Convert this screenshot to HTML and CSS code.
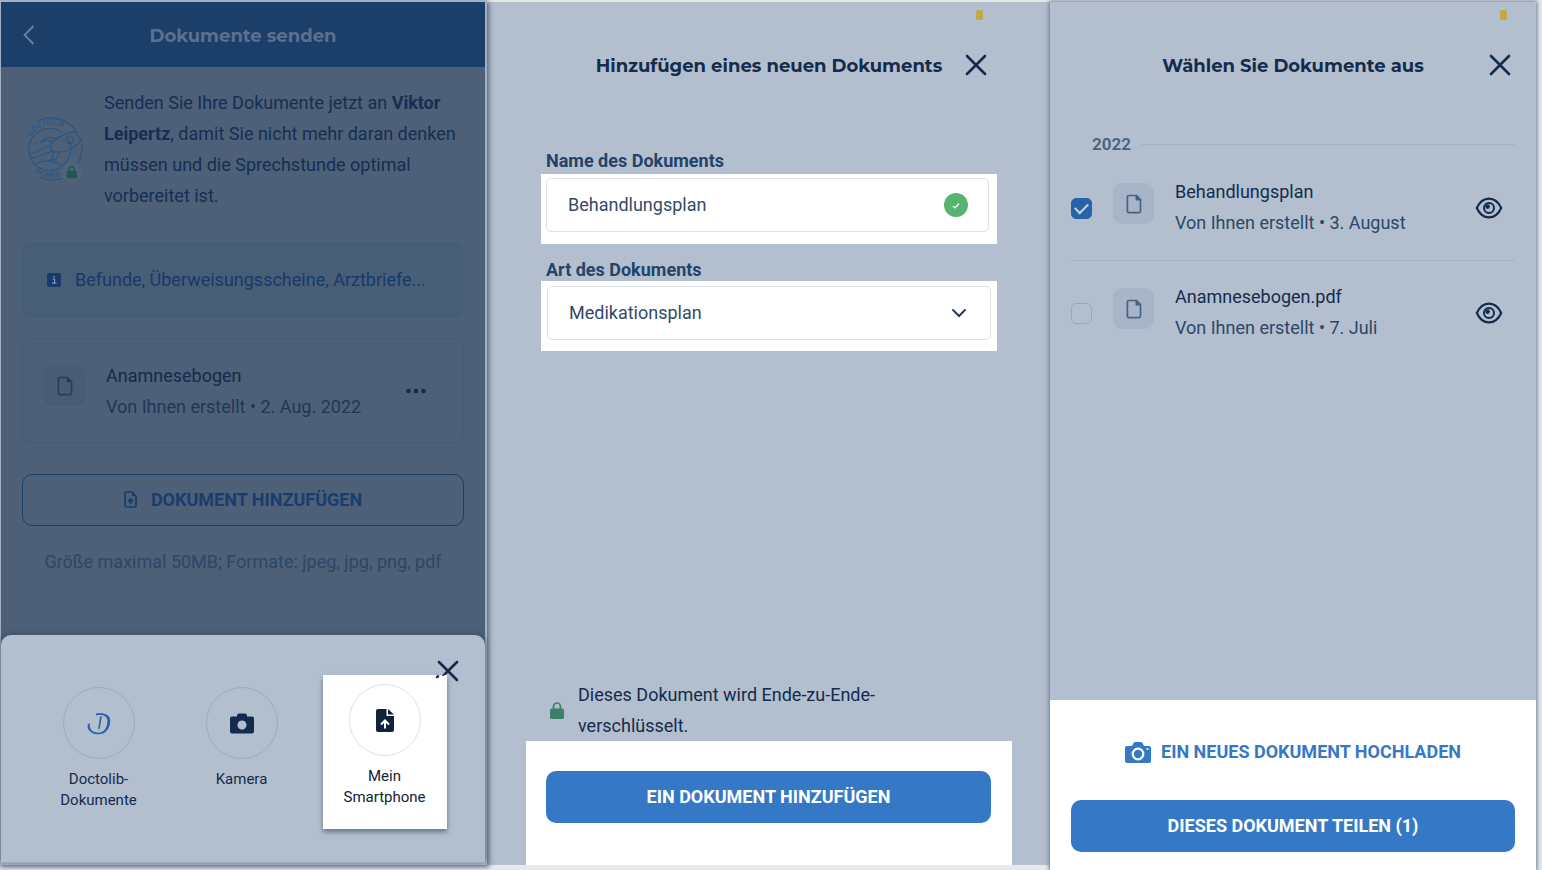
FILE: index.html
```html
<!DOCTYPE html>
<html lang="de">
<head>
<meta charset="utf-8">
<meta name="viewport" content="width=device-width, initial-scale=1">
<title>Dokumente senden</title>
<link rel="stylesheet" href="styles.css">
</head>
<body>
<svg class="sprite" aria-hidden="true">
  <symbol id="close" viewBox="0 0 22 22"><path d="M2 2l18 18M20 2L2 20" fill="none" stroke="currentColor" stroke-width="2.6" stroke-linecap="round"/></symbol>
  <symbol id="doc" viewBox="0 0 16 20"><path d="M3 1.500h7.500l4 4V17a1.600 1.600 0 0 1-1.600 1.600H3A1.600 1.600 0 0 1 1.400 17V3.100A1.600 1.600 0 0 1 3 1.500z" fill="none" stroke="currentColor" stroke-width="1.700"/><path d="M10 1.500l4.500 4.500H10z" fill="currentColor" stroke="currentColor"/></symbol>
  <symbol id="lock" viewBox="0 0 14 17"><path d="M3.500 7V4.500a3.500 3.500 0 0 1 7 0V7" fill="none" stroke="currentColor" stroke-width="1.700"/><rect x="0" y="6.500" width="14" height="10.500" rx="1.800" fill="currentColor"/></symbol>
  <symbol id="eye" viewBox="0 0 28 22"><path d="M1.800 11C4.500 5 9 1.600 14 1.600S23.500 5 26.200 11C23.500 17 19 20.400 14 20.400S4.500 17 1.800 11z" fill="none" stroke="currentColor" stroke-width="2.200"/><circle cx="14" cy="11" r="5" fill="none" stroke="currentColor" stroke-width="2"/><circle cx="12.600" cy="9.600" r="2.300" fill="currentColor"/></symbol>
</svg>
<main class="screens">

  <section class="screen send">
    <header class="bar">
      <button class="bar-back" aria-label="Zurück"><svg width="12" height="20" viewBox="0 0 12 20"><path d="M10.500 1L1.500 10l9 9" fill="none" stroke="currentColor" stroke-width="1.800"/></svg></button>
      <h1 class="title">Dokumente senden</h1>
    </header>
    <div class="send-body">
      <div class="intro">
        <svg class="badge" width="56" height="66" viewBox="0 0 168 198" fill="none" stroke="currentColor" stroke-width="3.500">
          <path d="M30 16A91 91 0 0 1 145 42M164 88A91 91 0 0 1 152 142M104 187A91 91 0 0 1 36 182"/>
          <path d="M122 67A63 63 0 0 1 104 152M100 155A63 63 0 1 1 106 50"/>
          <path d="M76 78C98 58 122 48 154 46M165 68C146 96 120 112 78 108M143 38C146 54 154 64 166 70M76 78C70 88 70 100 78 108"/>
          <path d="M76 78C64 70 52 72 40 80C50 66 68 62 88 68M96 110C96 124 86 132 68 134C78 126 80 118 78 108"/>
          <circle cx="128" cy="71" r="11"/>
          <path d="M70 90C50 92 44 104 8 114M76 106C56 112 44 118 12 128M22 146C48 130 86 130 104 150"/>
          <circle cx="68" cy="47" r=".800"/><circle cx="24" cy="82" r=".800"/><circle cx="115" cy="121" r=".800"/>
          <path id="arc-top" stroke="none" d="M13 62A72 72 0 0 1 146 80"/>
          <path id="arc-low" stroke="none" d="M22 169A88 88 0 0 0 140 152"/>
          <g class="badge-text"><text><textPath href="#arc-top">DOCTOLIB</textPath></text><text><textPath href="#arc-low">PIONEE</textPath></text></g>
          <g class="badge-lock" stroke="none"><circle cx="134" cy="168" r="30"/><svg x="118" y="150" width="32" height="38"><use href="#lock"/></svg></g>
        </svg>
        <p>Senden Sie Ihre Dokumente jetzt an <strong>Viktor Leipertz</strong>, damit Sie nicht mehr daran denken müssen und die Sprechstunde optimal vorbereitet ist.</p>
      </div>
      <div class="notice">
        <svg width="14" height="14" viewBox="0 0 14 14"><rect width="14" height="14" rx="2" fill="#18396b"/><path d="M5.500 6h2v4M5 10.200h4.400" fill="none" stroke="#8294ad" stroke-width="1.200"/><circle cx="7" cy="3.800" r=".900" fill="#8294ad"/></svg>
        <span>Befunde, Überweisungsscheine, Arztbriefe...</span>
      </div>
      <article class="doc-card">
        <span class="doc-icon"><svg width="16" height="20"><use href="#doc"/></svg></span>
        <div class="doc-text"><h2>Anamnesebogen</h2><p>Von Ihnen erstellt • 2. Aug. 2022</p></div>
        <button class="more" aria-label="Mehr"><svg width="20" height="6" viewBox="0 0 20 6" fill="currentColor"><circle cx="2.500" cy="3" r="2.300"/><circle cx="10" cy="3" r="2.300"/><circle cx="17.500" cy="3" r="2.300"/></svg></button>
      </article>
      <button class="button outline">
        <svg width="13" height="17" viewBox="0 0 13 17"><path d="M2.500 1H8l4 4v9.500a1.500 1.500 0 0 1-1.500 1.500h-8A1.500 1.500 0 0 1 1 14.500v-12A1.500 1.500 0 0 1 2.500 1zM6.500 13V8.500M4 10.300l2.500-2.300L9 10.300" fill="none" stroke="currentColor" stroke-width="1.700"/><path d="M8 1l4 4H8z" fill="currentColor"/></svg>
        DOKUMENT HINZUFÜGEN
      </button>
      <p class="hint">Größe maximal 50MB; Formate: jpeg, jpg, png, pdf</p>
    </div>
    <div class="sheet">
      <div class="options">
        <button class="option">
          <span class="circle"><svg width="24" height="23" viewBox="0 0 24 23" fill="#2663ab"><path d="M9 1.500C17 .500 23 2 23.200 8.500C23.400 17 18 22.500 11 22.300C5 22.200-.500 18 .800 13C1.300 11.500 2.400 11.200 3 11.600C1.800 17 5.500 20.600 11 20.800C17 21 20.500 15 20.400 9C20.300 3.500 15.500 2.200 9 3.300z"/><path d="M13 4.800l1.900-.700-2.100 12.500-1.700.800z"/></svg></span>
          <span>Doctolib-<br>Dokumente</span>
        </button>
        <button class="option">
          <span class="circle"><svg width="24" height="21" viewBox="0 0 24 21" fill="currentColor"><path fill-rule="evenodd" d="M2 3.500h5V2Q7.500.500 9 .500h6Q16.500.500 17 2v1.500h5q2 0 2 2V18.500q0 2-2 2H2q-2 0-2-2V5.500q0-2 2-2zM12 7.500a4.500 4.500 0 1 0 .010 0z"/></svg></span>
          <span>Kamera</span>
        </button>
        <button class="option active">
          <span class="circle"><svg width="18" height="23" viewBox="0 0 18 23"><path d="M2 0h8.500v7H18v14q0 2-2 2H2q-2 0-2-2V2Q0 0 2 0z" fill="currentColor"/><path d="M12 0l6 5.500h-6z" fill="currentColor"/><path d="M9 19.500V12.500M5 15.500l4-4 4 4" fill="none" stroke="#fff" stroke-width="2"/></svg></span>
          <span>Mein<br>Smartphone</span>
        </button>
      </div>
      <button class="sheet-close" aria-label="Schließen"><svg width="24" height="22" viewBox="0 0 24 22" fill="none" stroke="currentColor" stroke-width="2.600" stroke-linecap="round"><path d="M4 2l18 18M22 2L10.500 13.500M2 17l1-.600"/><path d="M8 15.200l2-1.200" stroke-width="1.600"/></svg></button>
    </div>
  </section>

  <section class="screen add">
    <span class="marker"></span>
    <header class="head">
      <h2 class="title">Hinzufügen eines neuen Dokuments</h2>
      <button class="close" aria-label="Schließen"><svg width="22" height="22"><use href="#close"/></svg></button>
    </header>
    <form class="form">
      <label for="doc-name">Name des Dokuments</label>
      <div class="field">
        <input id="doc-name" type="text" value="Behandlungsplan">
        <svg class="field-icon" width="24" height="24" viewBox="0 0 24 24"><circle cx="12" cy="12" r="12" fill="#55b56e"/><path d="M9 13l2 2 4-4.500" fill="none" stroke="#fff" stroke-width="1.200"/></svg>
      </div>
      <label for="doc-type">Art des Dokuments</label>
      <div class="field type">
        <select id="doc-type"><option>Medikationsplan</option></select>
        <svg class="field-icon chevron" width="16" height="10" viewBox="0 0 16 10"><path d="M2 2l6 6 6-6" fill="none" stroke="#253c5a" stroke-width="2" stroke-linecap="round"/></svg>
      </div>
    </form>
    <p class="secure"><svg width="14" height="17"><use href="#lock"/></svg><span>Dieses Dokument wird Ende-zu-Ende-verschlüsselt.</span></p>
    <footer class="add-foot"><button class="button solid">EIN DOKUMENT HINZUFÜGEN</button></footer>
  </section>

  <section class="screen pick">
    <span class="marker"></span>
    <header class="head">
      <h2 class="title">Wählen Sie Dokumente aus</h2>
      <button class="close" aria-label="Schließen"><svg width="22" height="22"><use href="#close"/></svg></button>
    </header>
    <h3 class="year">2022</h3>
    <ul class="list">
      <li class="row">
        <input type="checkbox" id="pick-1" checked>
        <span class="doc-icon"><svg width="16" height="20"><use href="#doc"/></svg></span>
        <label class="doc-text" for="pick-1"><b>Behandlungsplan</b><span>Von Ihnen erstellt • 3. August</span></label>
        <button class="view" aria-label="Ansehen"><svg width="28" height="22"><use href="#eye"/></svg></button>
      </li>
      <li class="row">
        <input type="checkbox" id="pick-2">
        <span class="doc-icon"><svg width="16" height="20"><use href="#doc"/></svg></span>
        <label class="doc-text" for="pick-2"><b>Anamnesebogen.pdf</b><span>Von Ihnen erstellt • 7. Juli</span></label>
        <button class="view" aria-label="Ansehen"><svg width="28" height="22"><use href="#eye"/></svg></button>
      </li>
    </ul>
    <footer class="pick-foot">
      <button class="upload"><svg width="26" height="21" viewBox="0 0 26 21"><path d="M2 4h5l1.500-3q.500-1 1.500-1h6q1 0 1.500 1L19 4h5q2 0 2 2v13q0 2-2 2H2q-2 0-2-2V6q0-2 2-2z" fill="currentColor"/><circle cx="13" cy="12" r="5.300" fill="none" stroke="#fff" stroke-width="2.200"/><circle cx="22.500" cy="7" r="1" fill="#fff"/></svg><span>EIN NEUES DOKUMENT HOCHLADEN</span></button>
      <button class="button solid">DIESES DOKUMENT TEILEN (1)</button>
    </footer>
  </section>
</main>
</body>
</html>
```
FILE: styles.css
```css
* { box-sizing: border-box; }

body {
  margin: 0;
  background: #e6e8ea;
  color: #132b4c;
  font: 18px/31px Roboto, "Liberation Sans", sans-serif;
}

h1, h2, h3, p, ul { margin: 0; padding: 0; font-size: 18px; font-weight: 400; }
ul { list-style: none; }
svg { display: block; flex: none; }
.sprite { position: absolute; width: 0; height: 0; }

button {
  margin: 0;
  padding: 0;
  border: 0;
  background: none;
  color: inherit;
  font: inherit;
  cursor: pointer;
}

.screens {
  display: grid;
  grid-template-columns: 485fr 565fr 486fr;
  min-height: 100vh;
  padding: 2px 6px 0 0;
}

.screen {
  position: relative;
  display: flex;
  flex-direction: column;
  background: #b3bfce;
}

h1.title, h2.title {
  padding-top: 2px;
  font-family: Montserrat, Inter, sans-serif;
  font-size: 18px;
  font-weight: 700;
  line-height: 24px;
}

/* Screen 1: send documents */
.send {
  z-index: 1;
  margin-bottom: 7px;
  border-left: 1px solid #a3b0c1;
  background: #4e6078;
  box-shadow: 0 0 0 2px #a3b1c3, 2px 2px 5px 2px #56657b;
}

.bar {
  display: grid;
  grid-template-columns: 60px 1fr 60px;
  align-items: center;
  height: 65px;
  background: #1b3f69;
  color: #5b7090;
  text-align: center;
}
.bar-back { padding-left: 22px; color: #6f829d; }

.send-body { flex: 1; padding: 20px 21px; }

.intro { display: flex; align-items: center; gap: 21px; padding-left: 5px; color: #142f53; }
.intro strong { font-weight: 700; }
.badge { color: #2a5684; }
.badge-text { fill: #2a5684; stroke: none; font: 600 22px "Open Sans", sans-serif; }
.badge-lock { fill: #52647d; color: #23564f; }

.notice {
  display: flex;
  align-items: center;
  gap: 14px;
  height: 75px;
  margin-top: 31px;
  padding: 0 24px;
  border: 1px solid #3d5f7d;
  border-radius: 10px;
  background: #485e76;
  color: #18396b;
}

.doc-card {
  display: flex;
  align-items: center;
  gap: 21px;
  height: 105px;
  margin-top: 21px;
  padding: 0 37px 0 21px;
  border: 1px solid #475975;
  border-radius: 10px;
}
.doc-icon {
  display: grid;
  flex: none;
  place-items: center;
  align-self: flex-start;
  width: 41px;
  height: 41px;
  border-radius: 9px;
  background: #a8b5c8;
  color: #476285;
}
.doc-card .doc-icon { margin-top: 26px; background: #495b75; color: #263f61; }
.doc-text { flex: 1; }
.doc-card p { color: #1d385a; }

.button {
  display: flex;
  align-items: center;
  justify-content: center;
  width: 100%;
  height: 52px;
  padding-bottom: 2px;
  border-radius: 10px;
  font-weight: 700;
}
.outline { gap: 14px; margin-top: 31px; border: 1px solid #193d6d; color: #193d6d; }
.solid { background: #3579c6; color: #fff; }

.hint { margin-top: 20px; color: #2c4767; text-align: center; }

.sheet {
  position: relative;
  padding: 40px 29px 33px 26px;
  border-bottom: 1px solid #9eacbf;
  border-radius: 10px 10px 0 0;
  background: #b3bfce;
  box-shadow: 0 -2px 5px #40536d;
}
.options { display: grid; grid-template-columns: repeat(3, 1fr); justify-items: center; }
.option {
  display: flex;
  flex-direction: column;
  align-items: center;
  gap: 10px;
  width: 124px;
  padding-top: 12px;
  font-size: 15px;
  line-height: 21px;
}
.option.active {
  height: 154px;
  padding-top: 9px;
  background: #fff;
  box-shadow: 0 3px 5px #65758a;
  color: #11233a;
}
.circle {
  display: grid;
  place-items: center;
  width: 72px;
  height: 72px;
  border: 1px solid #9eacc0;
  border-radius: 50%;
}
.active .circle { border-color: #dbe0e8; }
.sheet-close { position: absolute; top: 25px; right: 26px; }

/* Shared header of screens 2 and 3 */
.marker {
  position: absolute;
  top: 8px;
  right: 29px;
  width: 7px;
  height: 10px;
  border-radius: 2px;
  background: #c0aa48;
}
.head {
  display: grid;
  grid-template-columns: 73px 1fr 73px;
  align-items: center;
  height: 126px;
}
.head .title { grid-column: 2; text-align: center; }
.close { justify-self: center; }

/* Screen 2: add a document */
.add { margin-bottom: 5px; padding: 0 38px 0 41px; }
.add .marker { right: 67px; }
.add .head { grid-template-columns: 60px 1fr 60px; }
.add .close { margin-right: 12px; }

.form { flex: 1; padding: 22px 15px 0; }
.form label {
  display: block;
  padding: 0 5px;
  color: #25436a;
  font-weight: 700;
  line-height: 22px;
}
.form label:first-child { margin-bottom: 2px; }
.field {
  position: relative;
  height: 70px;
  margin-bottom: 15px;
  padding: 4px 8px 0 5px;
  background: #fff;
}
.field.type { padding: 5px 6px 0; }
.field input, .field select {
  display: block;
  width: 100%;
  height: 54px;
  padding: 0 21px 2px;
  border: 1px solid #dbe0e8;
  border-radius: 5px;
  appearance: none;
  background: #fff;
  color: #334a66;
  font: inherit;
}
.field-icon { position: absolute; top: 19px; right: 29px; pointer-events: none; }
.chevron { top: 27px; right: 30px; }

.secure { display: flex; align-items: center; gap: 14px; padding: 0 110px 0 24px; }
.secure svg { color: #3b8069; }
.add-foot { padding: 30px 21px 42px 20px; background: #fff; }

/* Screen 3: choose documents */
.pick { box-shadow: 0 0 4px 1px #68788e; }

.year {
  display: flex;
  align-items: center;
  gap: 10px;
  margin: 4px 21px 0 42px;
  color: #476285;
  font-size: 17px;
  font-weight: 600;
  line-height: 24px;
}
.year::after { content: ""; flex: 1; height: 1px; background: #a4b3ca; }

.list { flex: 1; padding: 0 21px; }
.row {
  display: flex;
  align-items: center;
  gap: 21px;
  padding: 21px 12px 21px 0;
}
.row + .row { border-top: 1px solid #a4b3ca; }
.row .doc-icon { margin-top: 6px; }
.row .doc-text { margin: -1px 0 1px; }
.row .doc-text b, .row .doc-text span { display: block; font-weight: 400; }
.row .doc-text span { color: #2b476a; }
.row input {
  display: grid;
  flex: none;
  place-items: center;
  width: 21px;
  height: 21px;
  margin: 0;
  border: 1px solid #99a9c0;
  border-radius: 5px;
  appearance: none;
}
.row input:checked { border-color: #2863a8; background: #2863a8; }
.row input:checked::before {
  content: "";
  width: 11px;
  height: 6px;
  margin-bottom: 3px;
  border: solid #c5d2e2;
  border-width: 0 0 2px 2px;
  transform: rotate(-45deg);
}

.pick-foot { padding: 36px 21px 18px; background: #fff; }
.upload {
  display: flex;
  align-items: center;
  justify-content: center;
  gap: 10px;
  width: 100%;
  height: 32px;
  margin-bottom: 32px;
  color: #3579c6;
  font-weight: 700;
}
.upload span { padding-bottom: 2px; }
```
